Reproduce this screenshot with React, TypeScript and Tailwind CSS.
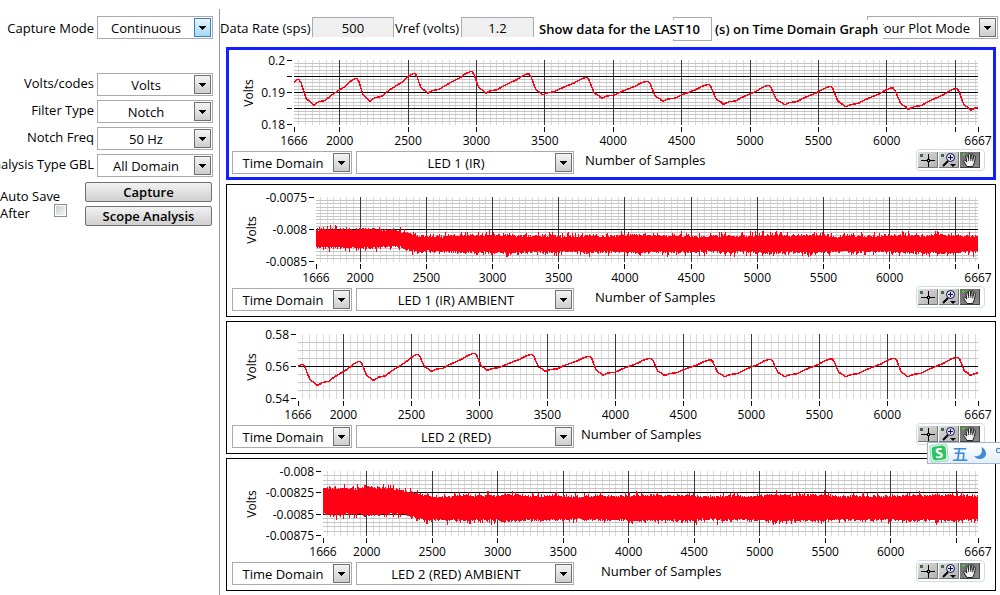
import React from "react";

type Point = [number, number];

/* ---------- deterministic noise ---------- */
function makeRandom(seed: number) {
  let s = seed;
  return () => {
    s = (s * 1664525 + 1013904223) % 4294967296;
    return s / 4294967296;
  };
}

/* Shape of one pulse: fall from the peak to the trough, then rise to the next peak. */
const FALL: Point[] = [[0.14, 0.12], [0.3, 0.43], [0.48, 0.74], [0.63, 0.82], [0.78, 0.88], [0.92, 0.99], [1, 1]];
const RISE: Point[] = [[0.11, 0.12], [0.27, 0.17], [0.39, 0.33], [0.5, 0.45], [0.59, 0.54], [0.75, 0.7], [0.88, 0.89], [1, 1]];

function pulsePoints(start: Point, peaks: Point[], troughs: Point[], end: Point): string {
  const pts: Point[] = [start];
  peaks.forEach((peak, i) => {
    const from: Point = i === 0 ? start : troughs[i - 1];
    if (i > 0) RISE.forEach(([t, v]) => pts.push([from[0] + (peak[0] - from[0]) * t, from[1] + (peak[1] - from[1]) * v]));
    else pts.push(peak);
    const edge: Point = [peak[0] + 2, peak[1]];
    pts.push(edge);
    const low = troughs[i];
    FALL.forEach(([t, v]) => pts.push([edge[0] + (low[0] - edge[0]) * t, edge[1] + (low[1] - edge[1]) * v]));
  });
  pts.push([end[0] - 3, end[1] + 0.5], end);
  return pts.map(([x, y]) => `${x.toFixed(1)},${y.toFixed(1)}`).join(" ");
}

interface Band {
  top: number;
  bottom: number;
  drop: number;
  from: number;
  to: number;
  seed: number;
}

function bandPoints(width: number, band: Band): string {
  const rnd = makeRandom(band.seed);
  const upper: string[] = [];
  const lower: string[] = [];
  for (let x = 0; x < width; x++) {
    const k = Math.min(1, Math.max(0, (x - band.from) / (band.to - band.from)));
    const sway = Math.sin(x / 23) * 0.6 + Math.sin(x / 7) * 0.4;
    const spikeUp = Math.pow(rnd(), 6) * 4.5;
    const spikeDown = Math.pow(rnd(), 6) * 4.5;
    const t = Math.round(band.top + band.drop * k - sway - rnd() * 2.2 - spikeUp);
    const b = Math.round(band.bottom + (band.drop - 1) * k + sway + rnd() * 2.2 + spikeDown);
    upper.push(`${x},${t} ${x + 1},${t}`);
    lower.unshift(`${x + 1},${b} ${x},${b}`);
  }
  return upper.join(" ") + " " + lower.join(" ");
}

interface Channel {
  name: string;
  width: number;
  gutter: string;
  caption: string;
  voltsX: number;
  labels: { y: number; text?: string }[];
  major: number[];
  minorStep: number;
  line?: string;
  band?: string;
}

const CHANNELS: Channel[] = [
  {
    name: "LED 1 (IR)",
    width: 684,
    gutter: "pl-[65px] pr-[15px]",
    caption: "ml-[11px]",
    voltsX: -45,
    labels: [{ y: 0, text: "0.2" }, { y: 16 }, { y: 32, text: "0.19" }, { y: 48 }, { y: 64, text: "0.18" }],
    major: [16, 32, 48],
    minorStep: 3.2,
    line: pulsePoints(
      [0, 22.5],
      [[3, 19.7], [61, 18.7], [119, 13.7], [176, 11.7], [233, 14], [291, 17.7], [352, 21.3], [413, 24.7], [473, 25.7], [535, 26.7], [597, 28], [661, 28.7]],
      [[20, 45], [76, 41], [134, 33], [192, 33], [249, 34.7], [308, 38], [369, 41], [430, 44], [491, 44.7], [552, 46.7], [615, 49], [677, 50]],
      [684, 47.5],
    ),
  },
  {
    name: "LED 1 (IR) AMBIENT",
    width: 662,
    gutter: "pl-[89px] pr-[17px]",
    caption: "ml-[21px]",
    voltsX: -64,
    labels: [{ y: 0, text: "-0.0075" }, { y: 32, text: "-0.008" }, { y: 64, text: "-0.0085" }],
    major: [32],
    minorStep: 3.2,
    band: bandPoints(662, { top: 34, bottom: 49, drop: 6, from: 80, to: 102, seed: 71 }),
  },
  {
    name: "LED 2 (RED)",
    width: 680,
    gutter: "pl-[71px] pr-[17px]",
    caption: "ml-[7px]",
    voltsX: -46,
    labels: [{ y: 0, text: "0.58" }, { y: 32, text: "0.56" }, { y: 64, text: "0.54" }],
    major: [32],
    minorStep: 8,
    line: pulsePoints(
      [0, 32.5],
      [[3, 30.7], [60, 27.7], [118, 20.7], [175, 19.3], [232, 20.7], [290, 22.3], [351, 24.3], [411, 26], [471, 25.3], [532, 25], [595, 24.3], [658, 23.3]],
      [[20, 51.3], [76, 46.3], [134, 37.3], [190, 36.3], [248, 37.3], [305, 41], [367, 41.3], [427, 42.7], [487, 42.7], [548, 42.7], [610, 42.7], [673, 41.3]],
      [680, 39],
    ),
  },
  {
    name: "LED 2 (RED) AMBIENT",
    width: 655,
    gutter: "pl-[96px] pr-[17px]",
    caption: "ml-[27px]",
    voltsX: -71,
    labels: [{ y: 0, text: "-0.008" }, { y: 21, text: "-0.00825" }, { y: 43, text: "-0.0085" }, { y: 64, text: "-0.00875" }],
    major: [21, 43],
    minorStep: 64 / 15,
    band: bandPoints(655, { top: 19, bottom: 42, drop: 7, from: 76, to: 104, seed: 1234 }),
  },
];

const FIRST = 1666;
const LAST = 6667;
const pct = (sample: number) => `${((sample - FIRST) / (LAST - FIRST)) * 100}%`;
const MINOR_X = Array.from({ length: 100 }, (_, i) => 1700 + i * 50).filter((v) => v % 500 !== 0 && v < LAST);
const MAJOR_X = [2000, 2500, 3000, 3500, 4000, 4500, 5000, 5500, 6000, 6500];

function Plot({ ch }: { ch: Channel }) {
  const rows: number[] = [];
  for (let y = ch.minorStep; y < 63.5; y += ch.minorStep) rows.push(Math.round(y));
  return (
    <svg className="block h-[91px] w-full overflow-visible fill-black text-[12px]" role="img" aria-label={`${ch.name} samples`}>
      <g shapeRendering="crispEdges">
        {MINOR_X.map((v) => (
          <line key={v} x1={pct(v)} x2={pct(v)} y1={0} y2={65} stroke="#dadada" />
        ))}
        {rows.map((y) => (
          <rect key={y} x={0} y={y} width="100%" height={1} fill="#c6c6c6" />
        ))}
        {MAJOR_X.map((v) => (
          <g key={v} stroke="#3a3a3a">
            <line x1={pct(v)} x2={pct(v)} y1={0} y2={65} />
            <line x1={pct(v)} x2={pct(v)} y1={67} y2={72} stroke="#000" />
          </g>
        ))}
        {ch.major.map((y) => (
          <rect key={y} x={0} y={y} width="100%" height={1} fill="#000" />
        ))}
        <rect x={0} y={67} width={1} height={5} />
        <line x1="100%" x2="100%" y1={67} y2={72} stroke="#000" />
        {ch.labels.map((l) => (
          <rect key={l.y} x={-7} y={l.y} width={5} height={1} />
        ))}
      </g>
      <svg x={0} y={0} width="100%" height={64} viewBox={`0 0 ${ch.width} 64`} preserveAspectRatio="none">
        {ch.line && (
          <polyline
            points={ch.line}
            fill="none"
            stroke="#ff0014"
            strokeWidth={1.5}
            shapeRendering="crispEdges"
            vectorEffect="non-scaling-stroke"
          />
        )}
        {ch.band && <polygon points={ch.band} fill="#ff0014" shapeRendering="crispEdges" />}
      </svg>
      {ch.labels.map(
        (l) =>
          l.text && (
            <text key={l.y} x={-9} y={l.y + 5} textAnchor="end">
              {l.text}
            </text>
          ),
      )}
      {[FIRST, ...MAJOR_X.slice(0, -1), LAST].map((v) => (
        <text key={v} x={pct(v)} y={85} textAnchor="middle">
          {v}
        </text>
      ))}
      <text transform={`translate(${ch.voltsX + 4} 33) rotate(-90)`} textAnchor="middle">
        Volts
      </text>
    </svg>
  );
}

function Select({
  id,
  label,
  options,
  className,
  hot = false,
}: {
  id: string;
  label?: string;
  options: string[];
  className: string;
  hot?: boolean;
}) {
  return (
    <div className={`relative h-[23px] shrink-0 ${className}`}>
      <select
        id={id}
        aria-label={label}
        className="block h-full w-full appearance-none border border-[#a9a9b2] bg-white pr-[18px] text-center text-[13px] leading-[20px] text-black [text-align-last:center]"
      >
        {options.map((o) => (
          <option key={o}>{o}</option>
        ))}
      </select>
      <span
        className={`pointer-events-none absolute top-[2px] right-[2px] flex h-[19px] w-[17px] items-center justify-center border ${
          hot ? "border-[#3c7fb1] bg-linear-to-b from-[#e6f5fd] to-[#a2d9f7]" : "border-[#707070] bg-linear-to-b from-[#f4f4f4] to-[#cdcdcd]"
        }`}
      >
        <svg width="7" height="4" viewBox="0 0 7 4" shapeRendering="crispEdges" aria-hidden="true">
          <path d="M0 0h7v1h-1v1h-1v1h-1v1h-1v-1h-1v-1h-1v-1h-1z" />
        </svg>
      </span>
    </div>
  );
}

function GraphPalette() {
  return (
    <div className="-mt-0.5 mr-2 ml-auto flex h-[22px] w-[69px] shrink-0 items-center gap-px self-start rounded-[4px] border border-[#cfdce6] bg-white pl-px">
      <button type="button" aria-label="Cursor" className="h-4 w-5 border-r border-b border-[#777] bg-linear-to-br from-[#dcdcdc] to-[#b4b4b4]">
        <svg className="block" width="19" height="15" viewBox="0 0 19 15" shapeRendering="crispEdges" aria-hidden="true">
          <path fill="#3f6b3f" d="M2 2h3v3H2z" />
          <path fill="#000" d="M3 8h6v1H3zM12 8h5v1h-5zM10 2h1v5h-1zM10 10h1v5h-1zM9 7h3v3H9z" />
          <path fill="#ddd" d="M10 8h1v1h-1z" />
        </svg>
      </button>
      <button type="button" aria-label="Zoom" className="h-4 w-5 border-r border-b border-[#777] bg-linear-to-br from-[#dcdcdc] to-[#b4b4b4]">
        <svg className="block" width="19" height="15" viewBox="0 0 19 15" aria-hidden="true">
          <path fill="#3f6b3f" d="M2 2h3v3H2z" />
          <path d="M4 14 9 9" stroke="#000" strokeWidth="2" />
          <circle cx="11.500" cy="5.500" r="4" fill="#dfe2ff" stroke="#10103a" />
          <path d="M9 5.500h5M11.500 3v5" stroke="#10103a" />
          <path d="M11 12h6l-3 3z" />
        </svg>
      </button>
      <button type="button" aria-label="Pan" className="h-4 w-5 border-r border-b border-[#444] bg-linear-to-br from-[#6d6d6d] to-[#8b8b8b]">
        <svg className="block" width="19" height="15" viewBox="0 0 19 15" aria-hidden="true">
          <path
            fill="#f2f2f2"
            stroke="#111"
            strokeWidth="0.900"
            strokeLinejoin="round"
            d="M7 14.500 3.800 9.500c-.6-1 .6-1.800 1.400-1L6.800 10 6 4.500c-.1-1.300 1.500-1.400 1.800-.2L8.600 7V2.600c0-1.200 1.800-1.200 1.900 0L10.800 7l.6-4.300c.2-1.200 1.800-1 1.700.2L12.800 7.500l1-2.900c.4-1 1.800-.6 1.600.5l-1 5.400-1.700 4z"
          />
          <path d="M8.600 7v2M10.800 7v2M12.800 7.500v2" stroke="#111" strokeWidth="0.800" />
          <path fill="#2fe010" d="M3 1h1v1h1v1H4v1H3V3H2V2h1z" />
        </svg>
      </button>
    </div>
  );
}

function GraphPanel({ ch, index, active }: { ch: Channel; index: number; active: boolean }) {
  return (
    <section className={active ? "border-3 border-[#1020ff] pt-[10px] pb-[3px]" : "border border-black pt-3 pb-[5px]"}>
      <div className={ch.gutter}>
        <Plot ch={ch} />
      </div>
      <div className={`flex items-center ${active ? "pl-[3px]" : "pr-[2px] pl-[5px]"}`}>
        <Select id={`domain-${index}`} label="Domain" options={["Time Domain", "Frequency Domain", "Histogram"]} className="w-[120px]" />
        <Select
          id={`channel-${index}`}
          label="Channel"
          options={[ch.name, ...CHANNELS.map((c) => c.name).filter((n) => n !== ch.name)]}
          className="ml-1 w-[218px]"
        />
        <span className={`self-start leading-[18px] whitespace-nowrap ${ch.caption}`}>Number of Samples</span>
        <GraphPalette />
      </div>
    </section>
  );
}

const SETTINGS = [
  { id: "codes", label: "Volts/codes", options: ["Volts", "Codes"] },
  { id: "filter", label: "Filter Type", options: ["Notch", "None", "Low Pass"] },
  { id: "notch", label: "Notch Freq", options: ["50 Hz", "60 Hz"] },
  { id: "analysis", label: "Analysis Type GBL", options: ["All Domain", "Time Domain"] },
];

function Sidebar() {
  const action =
    "block h-5 w-full rounded-[2px] border border-[#707070] bg-linear-to-b from-[#f2f2f2] to-[#cfcfcf] text-[13px] leading-[18px] font-semibold";
  return (
    <aside className="mt-[9px] w-[220px] shrink-0 overflow-hidden border-r border-[#9a9a9a] pt-[7px] pr-[6px]">
      <div className="flex items-center justify-end gap-[3px]">
        <label htmlFor="mode" className="whitespace-nowrap">Capture Mode</label>
        <Select id="mode" options={["Continuous", "Finite"]} className="w-[116px]" hot />
      </div>
      <div className="mt-[34px] flex flex-col gap-1">
        {SETTINGS.map((s) => (
          <div key={s.id} className="flex items-center justify-end gap-[3px]">
            <label htmlFor={s.id} className="pb-[3px] whitespace-nowrap">{s.label}</label>
            <Select id={s.id} options={s.options} className="w-[116px]" />
          </div>
        ))}
      </div>
      <div className="mt-[5px] flex pr-px">
        <div className="flex w-[85px] shrink-0 items-start pt-[6px]">
          <label htmlFor="autosave" className="w-[54px] leading-[17px] whitespace-nowrap">
            Auto Save
            <br />
            After
          </label>
          <input
            id="autosave"
            type="checkbox"
            className="mt-4 h-[13px] w-[13px] appearance-none border border-[#8e8f8f] bg-linear-to-br from-[#c8ccd0] to-[#f6f6f6] ring-1 ring-white ring-inset"
          />
        </div>
        <div className="flex flex-1 flex-col gap-1">
          <button type="button" className={action}>Capture</button>
          <button type="button" className={action}>Scope Analysis</button>
        </div>
      </div>
    </aside>
  );
}

function Toolbar() {
  const readout = "h-5 border border-b-0 border-[#a9a9b2] bg-[#efefef] text-center text-[13px] text-black";
  return (
    <header className="flex h-[31px] items-start whitespace-nowrap">
      <label htmlFor="rate" className="mt-[10px] w-[92px] leading-[18px]">Data Rate (sps)</label>
      <input id="rate" readOnly defaultValue="500" className={`mt-2 w-[82px] ${readout}`} />
      <label htmlFor="vref" className="mt-[10px] w-[67px] pl-px leading-[18px]">Vref (volts)</label>
      <input id="vref" readOnly defaultValue="1.2" className={`mt-2 w-[73px] ${readout}`} />
      <label htmlFor="last" className="z-10 mt-[11px] ml-[5px] w-[145px] bg-white leading-[19px] font-semibold">
        Show data for the LAST
      </label>
      <input
        id="last"
        defaultValue="10"
        className="mt-2 -ml-[11px] h-6 w-[39px] border border-[#a9a9b2] bg-white text-center text-[13px] font-semibold"
      />
      <span className="z-10 mt-[11px] ml-[3px] w-[168px] bg-white leading-[19px] font-semibold">(s) on Time Domain Graph</span>
      <Select id="plots" label="Plot mode" options={["Four Plot Mode", "Single Plot Mode"]} className="mt-[7px] -ml-4 min-w-[131px] flex-1" />
    </header>
  );
}

function InputMethodBar() {
  return (
    <div className="fixed top-[442px] right-0 flex h-[22px] w-[73px] items-center overflow-hidden border border-r-0 border-[#a3b5cc] bg-linear-to-b from-white to-[#e2eef8] pl-[2px]">
      <span className="flex h-[18px] w-[18px] shrink-0 -rotate-6 items-center justify-center rounded-[3px] border border-[#8fdcae] bg-white">
        <span className="flex h-[14px] w-[14px] items-center justify-center rounded-[3px] bg-[#2fc463] text-[14px] leading-[14px] font-bold text-white">S</span>
      </span>
      <span className="ml-1 w-4 shrink-0 font-['Noto_Sans_CJK_SC',sans-serif] text-[16px] leading-5 font-medium text-[#3d8ad6]">五</span>
      <svg className="ml-[5px] shrink-0" width="14" height="14" viewBox="0 0 14 14" aria-hidden="true">
        <path fill="#3d8ad6" d="M8.500 1c5 2.500 6 8 2.500 10.700C7.500 14 3 13 1 10c4 1 9.500-1 7.500-9z" />
      </svg>
      <svg className="mb-[6px] ml-[8px] shrink-0" width="7" height="7" viewBox="0 0 7 7" aria-hidden="true">
        <circle cx="3.500" cy="3.500" r="2.200" fill="none" stroke="#3d8ad6" strokeWidth="1.200" />
      </svg>
    </div>
  );
}

export default function App() {
  return (
    <div className="flex min-h-screen overflow-hidden bg-white font-['Open_Sans','Noto_Sans',sans-serif] text-[13px] leading-[18px] text-black">
      <Sidebar />
      <main className="min-w-0 flex-1 pt-[9px]">
        <div className="pr-[2px]">
          <Toolbar />
        </div>
        <div className="mt-[7px] flex flex-col gap-1 pr-1 pl-[6px]">
          {CHANNELS.map((ch, i) => (
            <GraphPanel key={ch.name} ch={ch} index={i} active={i === 0} />
          ))}
        </div>
      </main>
      <InputMethodBar />
    </div>
  );
}
